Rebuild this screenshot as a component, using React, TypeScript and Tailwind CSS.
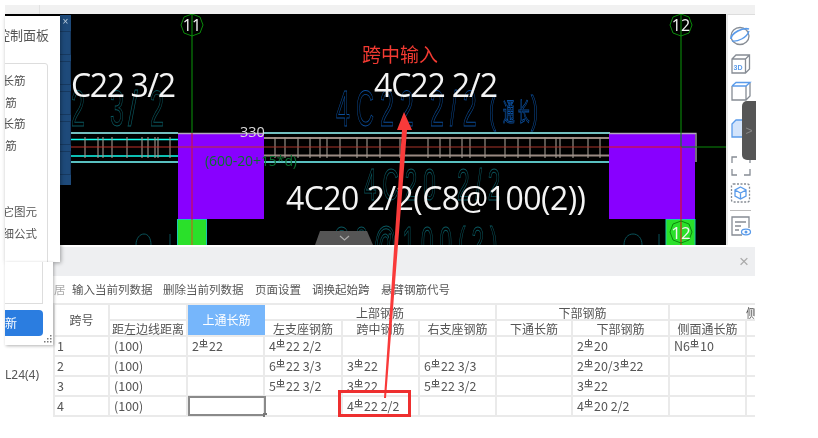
const R = () => (
  <svg viewBox="0 0 9 9" className="inline-block w-[9px] h-[9px] align-[3px] mx-[0.5px]" fill="none" stroke="#5c5c5c" strokeWidth="1">
    <path d="M4.500 0V8M1.500 2.500V5.500H7.500V2.500H1.500M0.300 7.800H8.700" />
  </svg>
);

function Rb({ t }: { t: string }) {
  const parts = t.split("#");
  return (
    <>
      {parts.map((p, i) => (
        <span key={i}>
          {i > 0 && <R />}
          {p}
        </span>
      ))}
    </>
  );
}

const rows = [
  ["1", "(100)", "2#22", "4#22 2/2", "", "", "", "2#20", "N6#10", ""],
  ["2", "(100)", "", "6#22 3/3", "3#22", "6#22 3/3", "", "2#20/3#22", "", ""],
  ["3", "(100)", "", "5#22 3/2", "3#22", "5#22 3/2", "", "3#22", "", ""],
  ["4", "(100)", "", "", "4#22 2/2", "", "", "4#20 2/2", "", ""],
];

const widths = [55, 78, 77, 78, 77, 77, 76, 97, 77, 87];
const sub = ["距左边线距离", "上通长筋", "左支座钢筋", "跨中钢筋", "右支座钢筋", "下通长筋", "下部钢筋", "侧面通长筋"];

const gridStyle = "border-r-2 border-b-2 border-[#eaeaea]";

function Canvas() {
  const big = { fontFamily: "'Open Sans','Noto Sans',sans-serif", fill: "#f4f4f4" };
  return (
    <svg viewBox="5 14 721 231" className="block w-[721px] h-[231px]">
      <rect x="5" y="14" width="721" height="231" fill="#000" />
      <g fontFamily="'Liberation Sans',sans-serif" fill="none" strokeWidth="0.9">
        <g stroke="#0a5a62">
          <text transform="translate(71 126) scale(.5 1)" fontSize="50">2</text>
          <text transform="translate(110 126) scale(.5 1)" fontSize="50">3</text>
          <text transform="translate(128 126) scale(.7 1)" fontSize="50">/</text>
          <text transform="translate(150 126) scale(.5 1)" fontSize="50">2</text>
          <text transform="translate(364 200) scale(.5 1)" fontSize="45" letterSpacing="12">4C20</text>
          <text transform="translate(457 200) scale(.5 1)" fontSize="45" letterSpacing="12">2/2</text>
          <text transform="translate(333 258) scale(.5 1)" fontSize="45" letterSpacing="12">C8@100(2)</text>
          <path d="M136 245C136 238 140 234 144 234C148 234 151 238 151 245M170 234V245" />
          <path d="M624 245C624 238 628 234 633 234C638 234 642 238 642 245M659 234V245" />
        </g>
        <g stroke="#0b4e9c">
          <text transform="translate(336 126) scale(.5 1)" fontSize="50" letterSpacing="12">4C22</text>
          <text transform="translate(430 126) scale(.5 1)" fontSize="50" letterSpacing="12">2/2</text>
          <text transform="translate(489 123) scale(.55 1)" fontSize="38">(</text>
          <text transform="translate(503 121) scale(.55 1.2)" fontSize="21" fontFamily="'Noto Sans CJK SC',sans-serif">通</text>
          <text transform="translate(518 121) scale(.55 1.2)" fontSize="21" fontFamily="'Noto Sans CJK SC',sans-serif">长</text>
          <text transform="translate(531 123) scale(.55 1)" fontSize="38">)</text>
        </g>
      </g>
      {/* beam */}
      <g>
        <path d="M71 133H178M264 133H610" stroke="#9ff" strokeWidth="1.4" />
        <path d="M71 139.500H178" stroke="#1fe" strokeWidth="1.6" />
        <path d="M71 156H178" stroke="#1fe" strokeWidth="1.6" />
        <path d="M71 162H178M264 162H610" stroke="#7ff" strokeWidth="1.4" />
        <path d="M264 138H610M264 155.500H610" stroke="#9a8a82" strokeWidth="2" />
        <path
          d="M85 137V158M98 137V158M103 137V158M112 137V158M127 137V158M142 137V158M148 137V158M155 137V158M158 137V158M170 137V158M275 137V158M285 137V158M298 137V158M310 137V158M320 137V158M327 137V158M340 137V158M357 137V158M367 137V158M380 137V158M400 137V158M428 137V158M440 137V158M450 137V158M462 137V158M470 137V158M485 137V158M505 137V158M518 137V158M530 137V158M545 137V158M556 137V158M560 137V158M573 137V158M588 137V158M600 137V158"
          stroke="#a39a92"
          strokeWidth="1.1"
        />
        <rect x="178" y="133" width="86" height="86" fill="#8800ff" />
        <rect x="609" y="133" width="86" height="86" fill="#8800ff" />
        <path d="M178 133.500H264M609 133.500H696V162" stroke="#b3a7bd" strokeWidth="1.3" fill="none" />
        <rect x="177.500" y="219.500" width="29" height="26" fill="#2ae02a" stroke="#19c9b0" />
        <rect x="666" y="219.500" width="29" height="26" fill="#2ae02a" stroke="#19c9b0" />
      </g>
      {/* axes */}
      <path d="M192 14V133M681 14V147H726" stroke="#0a8a0a" strokeWidth="1.1" fill="none" />
      <path d="M192 133V220" stroke="#d0143c" strokeWidth="1.1" />
      <path d="M192 220V245" stroke="#a57a20" strokeWidth="1.4" />
      <path d="M71 147H264" stroke="#c0302a" strokeWidth="1.2" fill="none" />
      <path d="M264 147H609" stroke="#a8352b" strokeWidth="1.2" fill="none" />
      <path d="M609 147H681V245" stroke="#e01414" strokeWidth="1.1" fill="none" />
      <polygon points="192,14 200,17 203,25 200,33 192,36 184,33 181,25 184,17" fill="none" stroke="#0a8a0a" />
      <polygon points="681,14 689,17 692,25 689,33 681,36 673,33 670,25 673,17" fill="none" stroke="#0a8a0a" />
      <polygon points="681,221 689,224 692,232 689,240 681,243 673,240 670,232 673,224" fill="none" stroke="#0a8a0a" />
      <text x="192" y="31" textAnchor="middle" fontSize="16" {...big}>11</text>
      <text x="681" y="31" textAnchor="middle" fontSize="16" {...big}>12</text>
      <text x="681" y="239" textAnchor="middle" fontSize="17" {...big}>12</text>
      {/* labels */}
      <text x="71" y="97" fontSize="32" textLength="105" {...big}>C22 3/2</text>
      <text x="374" y="97" fontSize="32" textLength="124" {...big}>4C22 2/2</text>
      <text x="286" y="210" fontSize="32" textLength="300" {...big}>4C20 2/2(C8@100(2))</text>
      <text x="240" y="137" fontSize="14.500" fill="#d8d8d8" fontFamily="'Open Sans',sans-serif">330</text>
      <text x="205" y="166" fontSize="14" textLength="92" fill="#0a6e30" fontFamily="'Open Sans',sans-serif">(600-20+15*d)</text>
      <text x="362" y="62" fontSize="19" fill="#f23a32" fontFamily="'Noto Sans CJK SC',sans-serif">跨中输入</text>
      {/* bottom tab */}
      <polygon points="315,245 320,231 367,231 373,245" fill="#555" />
      <path d="M340 236L344.500 240L349 236" stroke="#aaa" strokeWidth="1.2" fill="none" />
    </svg>
  );
}

function Toolbar() {
  const g = "#868c94";
  const b = "#5a9bea";
  return (
    <div className="w-[29px] h-[231px] bg-white relative border-t border-[#ddd] border-l-2 border-l-[#e8e8e8]">
      <svg viewBox="729 15 27 230" className="block w-[27px] h-[230px]" fill="none" strokeWidth="1.3">
        <ellipse cx="741" cy="36" rx="9" ry="8.500" stroke={g} />
        <path d="M732 39C732 33 744 27 750 29" stroke={b} strokeWidth="1.8" />
        <path d="M733 41C738 42 748 38 750 31" stroke={b} />
        <path d="M733 59L737 55H750.500V69L746.500 73H733ZM733 59H746.500V73M746.500 59L750.500 55" stroke={g} />
        <text x="734.500" y="70" fontSize="7" fontWeight="700" fill={b} stroke="none" fontFamily="'Liberation Sans',sans-serif">3D</text>
        <path d="M733 86V100H747V86M747 100L751 96V83" stroke={g} />
        <path d="M733 86L737 82.500H751L747 86H733" stroke={b} />
        <path d="M733 124L737 120H750V137H733Z" stroke={b} fill="#d3e4fb" />
        <path d="M733 163V157H738M745 157H751V163M733 169V175H738M745 175H751V169" stroke={g} />
        <rect x="732.500" y="184" width="18" height="18" rx="2" stroke={g} strokeDasharray="2 1.500" />
        <path d="M741.500 187L747 190V196L741.500 199L736 196V190ZM736 190L741.500 193L747 190M741.500 193V199" stroke={b} />
        <path d="M731 210.500H752" stroke="#bbb" strokeWidth="1" />
        <path d="M750 228V217H733V235H743M736 222H747M736 226H742M736 230H740" stroke={g} />
        <ellipse cx="747" cy="232" rx="4.500" ry="2.800" stroke={b} fill="#fff" />
        <circle cx="747" cy="232" r="1.500" fill={b} stroke="none" />
      </svg>
      <div className="absolute left-[14px] top-[86px] w-[14px] h-[59px] bg-[#565656] rounded-l-[5px] flex items-center justify-center text-[12px] text-[#888] font-['Liberation_Sans',sans-serif]">
        &gt;
      </div>
    </div>
  );
}

function LeftPanels() {
  const cjk = "font-['Noto_Sans_CJK_SC',sans-serif]";
  return (
    <>
      <div className="absolute left-[60px] top-[15px] w-[11px] h-[170px] bg-[#1e4a7a] flex flex-col items-center">
        <span className="h-[16px] text-[10px] leading-[14px] text-[#bcd] font-['Liberation_Sans',sans-serif]">×</span>
        {[0, 1, 2, 3, 4].map((i) => (
          <div key={i} className="w-full h-[24px] mb-[6px] border-r border-y border-[#17395f]" />
        ))}
      </div>
      <div className={`absolute left-[5px] top-[16px] w-[55px] h-[246px] bg-white shadow-[1px_1px_4px_rgba(0,0,0,0.35)] overflow-hidden text-[#555] ${cjk}`}>
        <div className="absolute left-[-8px] top-[10px] w-[60px] text-[13px] leading-[18px] whitespace-nowrap">控制面板</div>
        <div className="absolute left-[-6px] top-[47px] w-[49px] h-[220px] border border-[#ddd] rounded-[3px] text-[11.500px] leading-[21.700px]">
          <div className="flex flex-col items-start pt-[6px] whitespace-nowrap">
            <span>&nbsp;长筋</span>
            <span>&nbsp;&nbsp;筋</span>
            <span>&nbsp;长筋</span>
            <span>&nbsp;&nbsp;筋</span>
            <span className="mt-[44px]">&nbsp;它图元</span>
            <span>&nbsp;细公式</span>
          </div>
        </div>
      </div>
      <div className="absolute left-[5px] top-[262px] w-[48px] h-[83px] bg-white shadow-[1px_1px_3px_rgba(0,0,0,0.3)]">
        <div className="w-[38px] h-[42px] border-r border-b border-[#ddd]" />
        <div className={`mt-[6px] w-[38px] h-[26px] bg-[#2b7de0] rounded-r-[4px] text-white text-[12px] leading-[26px] ${cjk}`}>新</div>
        <svg viewBox="0 0 8 8" className="absolute right-[1px] bottom-[2px] w-[8px] h-[8px]" fill="#777">
          <rect x="6" y="0" width="1.500" height="1.500" />
          <rect x="3" y="3" width="1.500" height="1.500" />
          <rect x="6" y="3" width="1.500" height="1.500" />
          <rect x="0" y="6" width="1.500" height="1.500" />
          <rect x="3" y="6" width="1.500" height="1.500" />
          <rect x="6" y="6" width="1.500" height="1.500" />
        </svg>
      </div>
    </>
  );
}

export default function App() {
  return (
    <div className="relative w-[818px] h-[438px] bg-white overflow-hidden blur-[0.35px] font-['Noto_Sans','Noto_Sans_CJK_SC',sans-serif]">
      <div className="ml-[5px] w-[750px] pt-[5px]">
        <div className="h-[9px] bg-[#f1f1f1] flex">
          <div className="w-[35px] border-r border-[#e2e2e2]" />
        </div>
        <div className="flex h-[231px]">
          <Canvas />
          <Toolbar />
        </div>
        <div className="h-[31px] bg-[#eeeff1] border-t-2 border-white flex items-center justify-end pr-[6px] text-[#aaa] text-[17px] font-['Liberation_Sans',sans-serif]">
          ×
        </div>
        <div className="flex">
          <div className="w-[48px] pt-[87px] text-[12px] text-[#555] leading-[24px] whitespace-nowrap overflow-hidden">L24(4)</div>
          <div className="w-[702px] overflow-hidden">
            <div className="h-[27px] flex items-center text-[11.500px] text-[#555] whitespace-nowrap font-['Noto_Sans_CJK_SC',sans-serif]">
              <span className="w-[19px] pl-[1px] overflow-hidden text-[#aaa]">居</span>
              <span className="w-[91px]">输入当前列数据</span>
              <span className="w-[92px]">删除当前列数据</span>
              <span className="w-[57px]">页面设置</span>
              <span className="w-[69px]">调换起始跨</span>
              <span>悬臂钢筋代号</span>
            </div>
            <div className="border-t-2 border-l-2 border-[#eaeaea] w-[790px] text-[12.500px] text-[#555] font-['Noto_Sans_CJK_SC',sans-serif]">
              <div className="flex h-[32px] text-[12px]">
                <div style={{ width: widths[0] }} className={`${gridStyle} shrink-0 flex items-center justify-center`}>跨号</div>
                <div className="flex flex-col shrink-0" style={{ width: widths[1] }}>
                  <div className="h-[16px] border-r-2 border-b-2 border-[#eaeaea]" />
                  <div className={`h-[16px] ${gridStyle} leading-[15px] text-center whitespace-nowrap overflow-hidden`}>{sub[0]}</div>
                </div>
                <div style={{ width: widths[2] }} className="shrink-0 bg-[#76b6fb] text-white flex items-center justify-center border-b-2 border-[#eaeaea]">上通长筋</div>
                <div className="flex flex-col shrink-0">
                  <div className="flex h-[16px]">
                    <div className={`w-[232px] shrink-0 ${gridStyle} leading-[15px] text-center`}>上部钢筋</div>
                    <div className={`w-[173px] shrink-0 ${gridStyle} leading-[15px] text-center`}>下部钢筋</div>
                    <div className="w-[164px] shrink-0 border-b-2 border-[#eaeaea] leading-[15px] text-center">侧</div>
                  </div>
                  <div className="flex h-[16px]">
                    {sub.slice(2).map((s, i) => (
                      <div key={s + i} style={{ width: widths[i + 3] }} className={`shrink-0 ${gridStyle} leading-[15px] text-center whitespace-nowrap`}>{s}</div>
                    ))}
                    <div className="w-[87px] shrink-0 border-b-2 border-[#eaeaea]" />
                  </div>
                </div>
              </div>
              {rows.map((r, ri) => (
                <div key={ri} className="flex h-[20px]">
                  {r.map((c, ci) => (
                    <div
                      key={ci}
                      style={{ width: widths[ci] }}
                      className={`relative shrink-0 ${ci === 9 ? "border-b-2 border-[#eaeaea]" : gridStyle} ${ci === 0 ? "pl-[2px]" : "pl-[4px]"} leading-[18px] whitespace-nowrap`}
                    >
                      <Rb t={c} />
                      {ri === 3 && ci === 2 && (
                        <div className="absolute left-0 top-[-1px] w-[78px] h-[20px] border-2 border-[#8a8a8a]">
                          <div className="absolute right-[-3px] bottom-[-3px] w-[4px] h-[4px] bg-[#777]" />
                        </div>
                      )}
                    </div>
                  ))}
                </div>
              ))}
            </div>
          </div>
        </div>
      </div>
      <LeftPanels />
      <svg viewBox="0 0 818 438" className="absolute left-0 top-0 w-[818px] h-[438px] pointer-events-none">
        <polygon points="404,112 412,130 407,130 386,398 384,398 402,130 397,130" fill="#f93a3a" />
      </svg>
      <div className="absolute left-[338px] top-[390px] w-[73px] h-[27px] border-[3px] border-[#ee2f2f]" />
    </div>
  );
}
